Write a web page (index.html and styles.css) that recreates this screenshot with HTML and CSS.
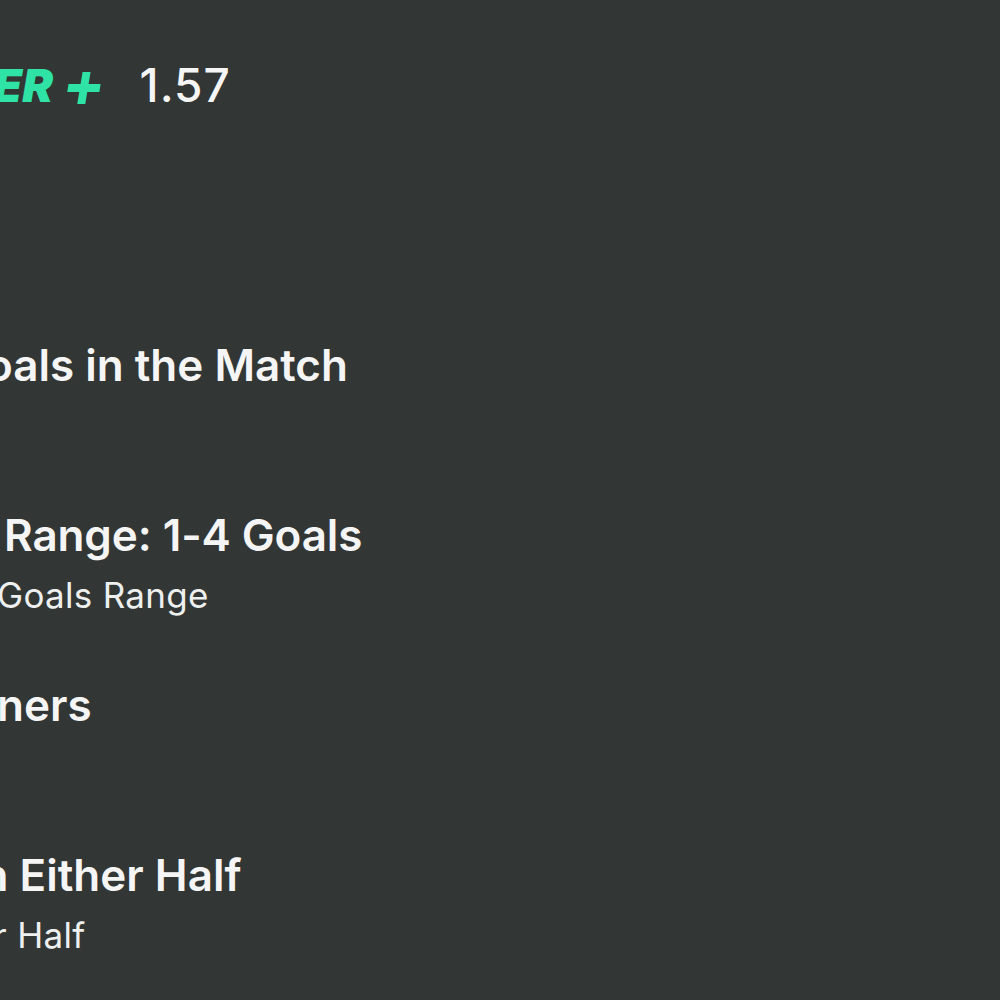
FILE: index.html
```html
<!DOCTYPE html>
<html>
<head>
<meta charset="utf-8">
<link rel="stylesheet" href="styles.css">
</head>
<body>
<div class="sheet">
  <header class="promo">
    <span class="promo-tag">POWER <span class="promo-plus">+</span></span>
    <span class="promo-odds">1.57</span>
  </header>
  <ul class="markets">
    <li class="market"><div class="market-title shift-match">Goals in the Match</div></li>
    <li class="market"><div class="market-title shift-range">Range: 1-4 Goals</div><div class="market-sub shift-range-sub">Goals Range</div></li>
    <li class="market"><div class="market-title shift-corners">Corners</div></li>
    <li class="market"><div class="market-title shift-half">Goal in Either Half</div><div class="market-sub shift-half-sub">Either Half</div></li>
  </ul>
</div>
</body>
</html>
```
FILE: styles.css
```css
html, body { margin: 0; padding: 0; }
body {
  background: #323635;
  color: #f4f5f4;
  font-family: Inter, "Noto Sans", sans-serif;
  overflow: hidden;
  width: 1000px;
  height: 1000px;
}
.sheet { margin-left: 0; }
.promo {
  display: flex;
  align-items: baseline;
  gap: 34px;
  padding-top: 56px;
  height: 56px;
  line-height: 56px;
  margin-left: -120px;
}
.promo-tag {
  color: #2fe3a6;
  font-weight: 900;
  font-style: italic;
  font-size: 46px;
  white-space: nowrap;
}
.promo-plus {
  font-size: 64px;
  font-weight: 700;
  vertical-align: -5px;
}
.promo-odds {
  font-size: 46px;
  font-weight: 500;
  letter-spacing: 1px;
}
.markets {
  list-style: none;
  margin: 225px 0 0 0;
  padding: 0;
}
.market { height: 170px; }
.market-title {
  font-size: 44px;
  font-weight: 600;
  line-height: 56px;
  white-space: nowrap;
}
.market-sub {
  font-size: 35px;
  font-weight: 400;
  letter-spacing: 0.3px;
  line-height: 40px;
  margin-top: 12px;
  color: #eef0ef;
  white-space: nowrap;
}
.shift-match { margin-left: -47px; }
.shift-range { margin-left: 4px; letter-spacing: -0.1px; }
.shift-range-sub { margin-left: -3px; }
.shift-corners { margin-left: -80px; }
.shift-half { margin-left: -138px; }
.shift-half-sub { margin-left: -90px; }
```
